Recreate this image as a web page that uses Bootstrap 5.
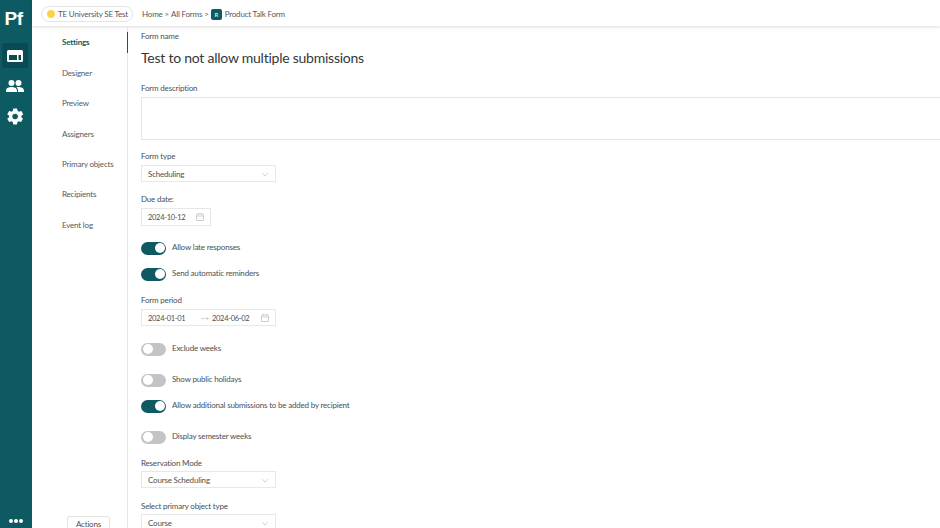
<!DOCTYPE html>
<html lang="en">
<head>
<meta charset="utf-8">
<title>Product Talk Form</title>
<link href="https://cdn.jsdelivr.net/npm/bootstrap@5.3.0/dist/css/bootstrap.min.css" rel="stylesheet">
<style>
html,body{height:528px;overflow:hidden;background:#fff}
body{font-family:Lato,"Noto Sans",sans-serif;font-size:8px;letter-spacing:-.19px;color:#4a4f52;line-height:11px}
.app-shell{height:528px}
.rail{width:32px;flex:none;background:#0e5a63;padding-top:8px;height:528px}
.rail-logo{font-family:"Liberation Sans",sans-serif;font-weight:700;font-size:19px;line-height:22px;color:#fff;height:22px;text-align:center;letter-spacing:-.5px;margin-left:-5px}
.rail-btn{width:26px;height:25px;margin:0 auto 6px 2px;border-radius:3px;display:flex;align-items:center;justify-content:center}
.rail-btn.on{background:#0a4a52;margin-top:13px;margin-bottom:5px}
.rail-more{margin-top:auto;padding-bottom:5px;height:9px;gap:1px;margin-left:-1px}
.rail-more i{display:block;width:4px;height:4px;border-radius:50%;background:#fff}
.main-col{min-width:0}
.topbar{height:26px;flex:none;box-shadow:0 1px 3px rgba(0,0,0,.14);padding:6px 0 0 9px;position:relative;color:#55595c}
.org-pill{height:16px;width:92px;border:1px solid #e4e4e4;border-radius:8px;padding:0 5px;gap:3px;margin-right:9px;white-space:nowrap}
.org-dot{width:8px;height:8px;border-radius:50%;background:#fcd34d;flex:none}
.crumb{gap:2px;white-space:nowrap;height:16px}
.crumb-r{width:11px;height:11px;border-radius:2px;background:#0e5a63;color:#fff;font-size:6px;line-height:11px;text-align:center;margin:0 1px 0 0}
.sub-nav{width:96px;flex:none;border-right:1px solid #e6e6e6;padding:6.4px 0 0 30px;height:502px;position:relative}
.sub-item{display:block;height:30.4px;line-height:20px;color:#55595c;text-decoration:none;white-space:nowrap}
.sub-item.on{color:#0e5a63;font-weight:700}
.sub-mark{position:absolute;right:-1px;top:6px;width:1px;height:21px;background:#0e5a63}
.act-btn{position:absolute;left:35px;top:490px;width:43px;height:24px;border:1px solid #e2e2e2;border-radius:2px;background:#fff;color:#4a4f52;padding:2px 0 0;line-height:11px;display:block;text-align:center}
.pane{padding:5px 0 0 13px;min-width:0;overflow:hidden}
.lbl{display:block;height:11px;line-height:11px;white-space:nowrap;color:#4a4f52}
.form-title{font-size:14px;letter-spacing:-.24px;line-height:20px;font-weight:400;color:#33383a;margin:6px 0 0}
.desc-box{height:43px;width:900px;border:1px solid #e6e6e6;margin-top:3px}
.lbl-desc{margin-top:15px}
.gap-a{margin-top:11px}
.gap-b{margin-top:12px}
.gap-n{margin-top:13px}
.gap-c{margin-top:14px}
.gap-d{margin-top:15px}
.gap-f{margin-top:16px}
.gap-e{margin-top:17px}
.fld{height:17px;border:1px solid #e8e8e8;background:#fff;padding:1px 6px 0;white-space:nowrap;color:#4a4f52;margin-top:3px}
.fld-tight{margin-top:2px}
.fld-w{width:135px}
.fld-s{width:70px;height:18px;padding-top:0}
.fld svg{flex:none}
.date-val{font-size:7.5px;letter-spacing:-.3px;width:37px;flex:none}
.date-arrow{margin-left:16px;margin-right:3px}
.date-cal{margin-left:auto}
.tgl{width:25px;height:13px;border-radius:7px;background:#c4c4c4;position:relative;flex:none;margin-right:6px}
.tgl::after{content:"";position:absolute;left:1.5px;top:1.5px;width:10px;height:10px;border-radius:50%;background:#fff}
.tgl.on{background:#0e5a63}
.tgl.on::after{left:13.5px}
.tgl-row{height:14px;white-space:nowrap}
.tgl-row span{position:relative;top:-1px}
</style>
</head>
<body>
<div class="d-flex app-shell">
  <aside class="rail d-flex flex-column">
    <div class="rail-logo">Pf</div>
    <div class="rail-btn on"><svg width="18" height="14" viewBox="0 0 18 14"><rect x="1" y="1" width="16" height="12" rx="1.5" fill="#fff"/><rect x="3" y="6" width="8" height="5" fill="#0a4a52"/><rect x="12.500" y="6" width="2.500" height="5" fill="#0a4a52"/></svg></div>
    <div class="rail-btn"><svg width="20" height="14" viewBox="0 0 20 14" fill="#fff"><circle cx="6.500" cy="4" r="3"/><circle cx="13.500" cy="4" r="3"/><path d="M1 13v-1.500C1 9 4 8 6.500 8S12 9 12 11.500V13zM13 13v-1.500c0-1.300-.6-2.500-1.600-3.300.7-.1 1.500-.2 2.100-.2 2.500 0 5.500 1 5.500 3.500V13z"/></svg></div>
    <div class="rail-btn"><svg width="19" height="19" viewBox="0 0 24 24" fill="#fff"><path d="M19.400 13c.1-.3.100-.7.100-1s0-.7-.1-1l2.100-1.600c.2-.2.200-.4.100-.6l-2-3.500c-.1-.2-.4-.3-.6-.2l-2.500 1c-.5-.4-1.100-.7-1.700-1L14 2.400c0-.2-.2-.4-.5-.4h-4c-.3 0-.5.200-.5.400l-.4 2.700c-.6.200-1.200.6-1.700 1l-2.500-1c-.2-.1-.5 0-.6.200l-2 3.500c-.1.200-.1.500.1.600L4 11c0 .3-.1.700-.1 1s0 .7.100 1l-2.100 1.600c-.2.200-.2.400-.1.600l2 3.500c.1.200.4.300.6.200l2.500-1c.5.400 1.100.7 1.700 1l.4 2.700c0 .2.200.4.500.4h4c.3 0 .5-.2.500-.4l.4-2.700c.6-.2 1.200-.6 1.700-1l2.500 1c.2.100.5 0 .6-.2l2-3.500c.1-.2.100-.5-.1-.6zM11.500 15.500a3.500 3.500 0 1 1 0-7 3.500 3.500 0 0 1 0 7z"/></svg></div>
    <div class="rail-more d-flex justify-content-center"><i></i><i></i><i></i></div>
  </aside>
  <div class="main-col flex-grow-1 d-flex flex-column">
    <header class="topbar d-flex align-items-start">
      <div class="org-pill d-flex align-items-center"><span class="org-dot"></span><span>TE University SE Test</span></div>
      <div class="crumb d-flex align-items-center"><span>Home</span><span>&gt;</span><span>All Forms</span><span>&gt;</span><span class="crumb-r">R</span><span>Product Talk Form</span></div>
    </header>
    <div class="d-flex flex-grow-1">
      <nav class="sub-nav">
        <a class="sub-item on" href="#">Settings</a>
        <a class="sub-item" href="#">Designer</a>
        <a class="sub-item" href="#">Preview</a>
        <a class="sub-item" href="#">Assigners</a>
        <a class="sub-item" href="#">Primary objects</a>
        <a class="sub-item" href="#">Recipients</a>
        <a class="sub-item" href="#">Event log</a>
        <span class="sub-mark"></span>
        <span class="act-btn">Actions</span>
      </nav>
      <main class="pane flex-grow-1">
        <label class="lbl">Form name</label>
        <h1 class="form-title">Test to not allow multiple submissions</h1>
        <label class="lbl lbl-desc">Form description</label>
        <div class="desc-box"></div>

        <label class="lbl gap-a">Form type</label>
        <div class="fld fld-w d-flex align-items-center justify-content-between"><span>Scheduling</span><svg width="8" height="5" viewBox="0 0 8 5" fill="none" stroke="#c8c8c8" stroke-width=".8"><path d="M1 1l3 3 3-3"/></svg></div>

        <label class="lbl gap-b">Due date:</label>
        <div class="fld fld-s d-flex align-items-center justify-content-between"><span class="date-val">2024-10-12</span><svg width="8" height="8" viewBox="0 0 8 8" fill="none" stroke="#c4c4c4" stroke-width=".8"><rect x=".5" y="1" width="7" height="6.500" rx=".5"/><path d="M.5 3h7M2.500 0v1.500M5.500 0v1.500"/></svg></div>

        <div class="tgl-row d-flex align-items-center gap-d"><i class="tgl on"></i><span>Allow late responses</span></div>
        <div class="tgl-row d-flex align-items-center gap-b"><i class="tgl on"></i><span>Send automatic reminders</span></div>

        <label class="lbl gap-c">Form period</label>
        <div class="fld fld-w d-flex align-items-center"><span class="date-val">2024-01-01</span><svg class="date-arrow" width="8" height="5" viewBox="0 0 8 5" fill="none" stroke="#c4c4c4" stroke-width=".7"><path d="M0 2.500h7.500M6 1l1.500 1.500L6 4"/></svg><span class="date-val">2024-06-02</span><svg class="date-cal" width="8" height="8" viewBox="0 0 8 8" fill="none" stroke="#c4c4c4" stroke-width=".8"><rect x=".5" y="1" width="7" height="6.500" rx=".5"/><path d="M.5 3h7M2.500 0v1.500M5.500 0v1.500"/></svg></div>

        <div class="tgl-row d-flex align-items-center gap-f"><i class="tgl"></i><span>Exclude weeks</span></div>
        <div class="tgl-row d-flex align-items-center gap-e"><i class="tgl"></i><span>Show public holidays</span></div>
        <div class="tgl-row d-flex align-items-center gap-b"><i class="tgl on"></i><span>Allow additional submissions to be added by recipient</span></div>
        <div class="tgl-row d-flex align-items-center gap-e"><i class="tgl"></i><span>Display semester weeks</span></div>

        <label class="lbl gap-c">Reservation Mode</label>
        <div class="fld fld-tight fld-w d-flex align-items-center justify-content-between"><span>Course Scheduling</span><svg width="8" height="5" viewBox="0 0 8 5" fill="none" stroke="#c8c8c8" stroke-width=".8"><path d="M1 1l3 3 3-3"/></svg></div>

        <label class="lbl gap-n">Select primary object type</label>
        <div class="fld fld-tight fld-w d-flex align-items-center justify-content-between"><span>Course</span><svg width="8" height="5" viewBox="0 0 8 5" fill="none" stroke="#c8c8c8" stroke-width=".8"><path d="M1 1l3 3 3-3"/></svg></div>
      </main>
    </div>
  </div>
</div>
</body>
</html>
